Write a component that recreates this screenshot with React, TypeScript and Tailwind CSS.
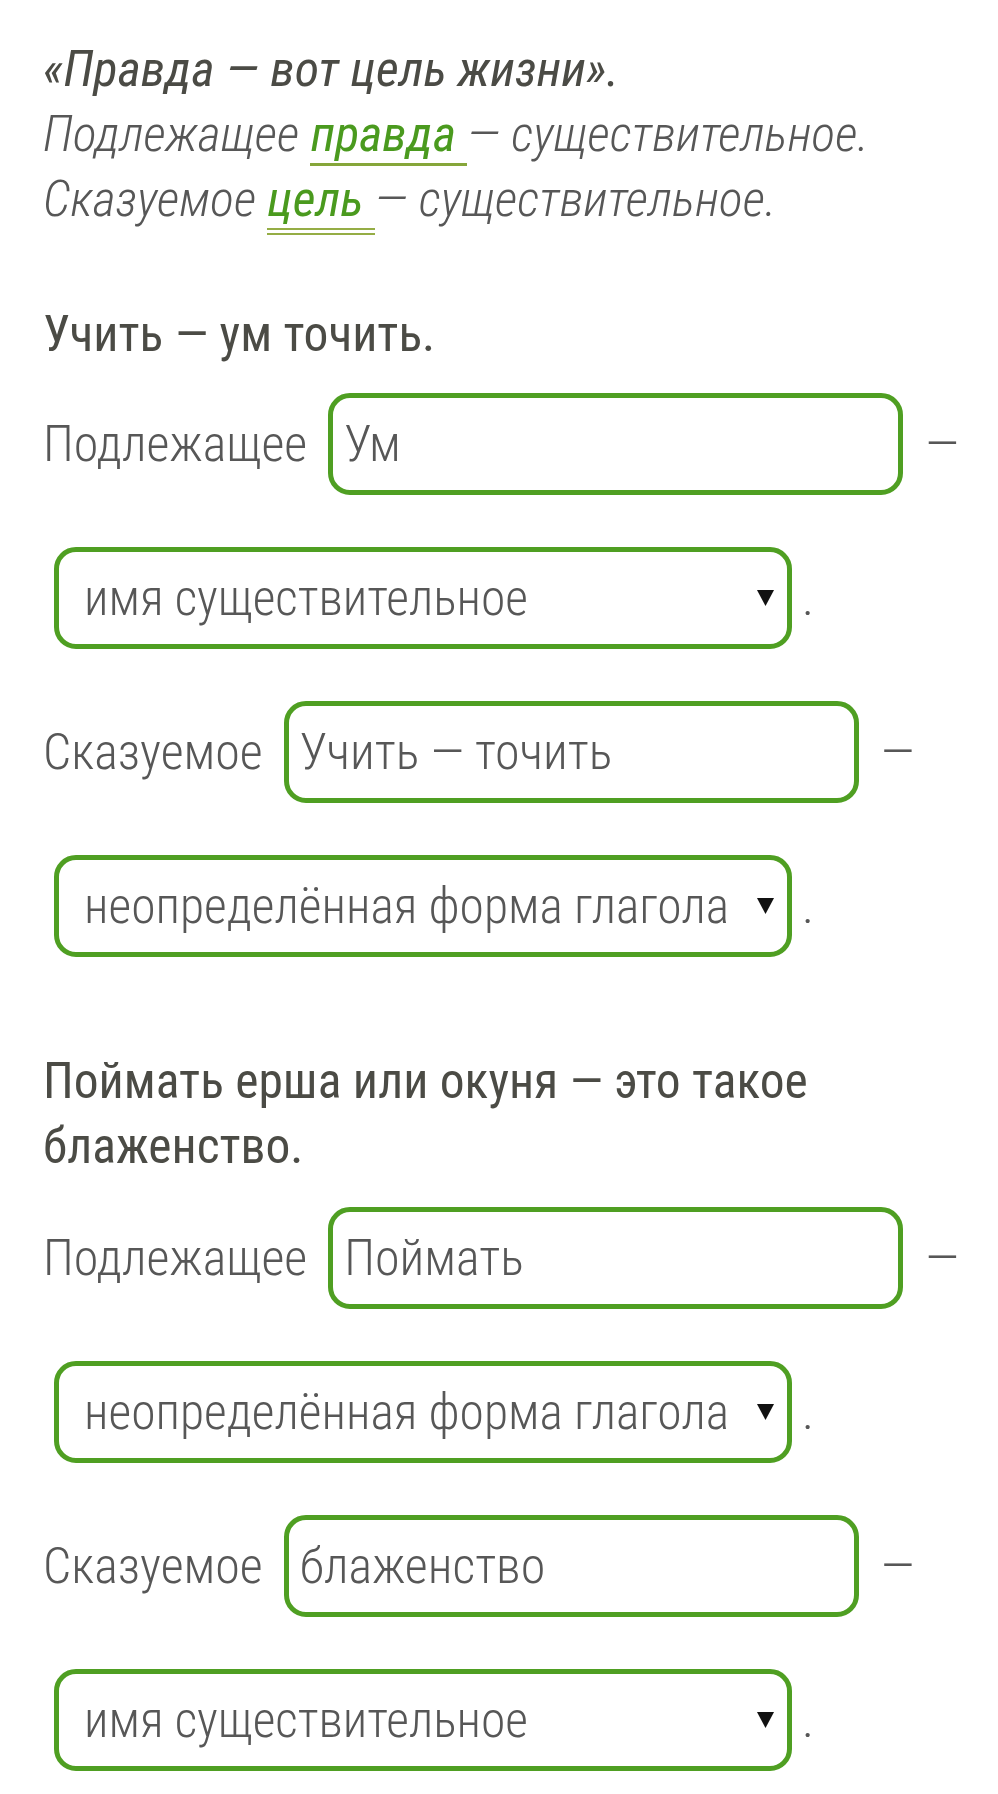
const BORDER = "border-[5px] border-[#4f9f22] rounded-[22px] bg-white";

function Arrow() {
  return (
    <svg width="17" height="16" viewBox="0 0 17 16" className="shrink-0">
      <path d="M0 0H17L8.5 16Z" fill="#111" />
    </svg>
  );
}

function InputRow({ label, value }: { label: string; value: string }) {
  return (
    <div className="flex items-center h-[102px]">
      <span className="font-light text-[#575757]">{label}</span>
      <div className={`${BORDER} ml-[21px] w-[575px] h-full flex items-center pl-[11px] font-light text-[#575757]`}>
        {value}
      </div>
      <span className="ml-[22px] font-light text-[#575757]">—</span>
    </div>
  );
}

function SelectRow({ value }: { value: string }) {
  return (
    <div className="flex items-center h-[102px] ml-[11px]">
      <div className={`${BORDER} w-[738px] h-full flex items-center justify-between pl-[25px] pr-[13px] font-light text-[#575757]`}>
        <span className="whitespace-nowrap text-[49.5px]">{value}</span>
        <Arrow />
      </div>
      <span className="ml-[10px] font-light text-[#575757]">.</span>
    </div>
  );
}

export default function App() {
  return (
    <div className="min-h-[1794px] w-[998px] bg-white pl-[43px] pt-[37px] text-[50px] leading-[65px] font-['Roboto_Condensed',Roboto,sans-serif]">
      <div className="italic">
        <p className="text-[#4b4b45]">«Правда — вот цель жизни».</p>
        <p className="font-light text-[#575757]">
          Подлежащее{" "}
          <span className="font-normal text-[#4a9a1e] border-b-[3px] border-[#86a63a]">правда </span>— существительное.
        </p>
        <p className="font-light text-[#575757]">
          Сказуемое{" "}
          <span className="font-normal text-[#4a9a1e] border-b-[7px] border-double border-[#95ad45]">цель </span>— существительное.
        </p>
      </div>

      <p className="mt-[70px] text-[49.5px] text-[#4b4b45]">Учить — ум точить.</p>
      <div className="mt-[26px] flex flex-col gap-[52px]">
        <InputRow label="Подлежащее" value="Ум" />
        <SelectRow value="имя существительное" />
        <InputRow label="Сказуемое" value="Учить — точить" />
        <SelectRow value="неопределённая форма глагола" />
      </div>

      <p className="mt-[92px] w-[900px] text-[49.5px] text-[#4b4b45]">Поймать ерша или окуня — это такое блаженство.</p>
      <div className="mt-[28px] flex flex-col gap-[52px]">
        <InputRow label="Подлежащее" value="Поймать" />
        <SelectRow value="неопределённая форма глагола" />
        <InputRow label="Сказуемое" value="блаженство" />
        <SelectRow value="имя существительное" />
      </div>
    </div>
  );
}
